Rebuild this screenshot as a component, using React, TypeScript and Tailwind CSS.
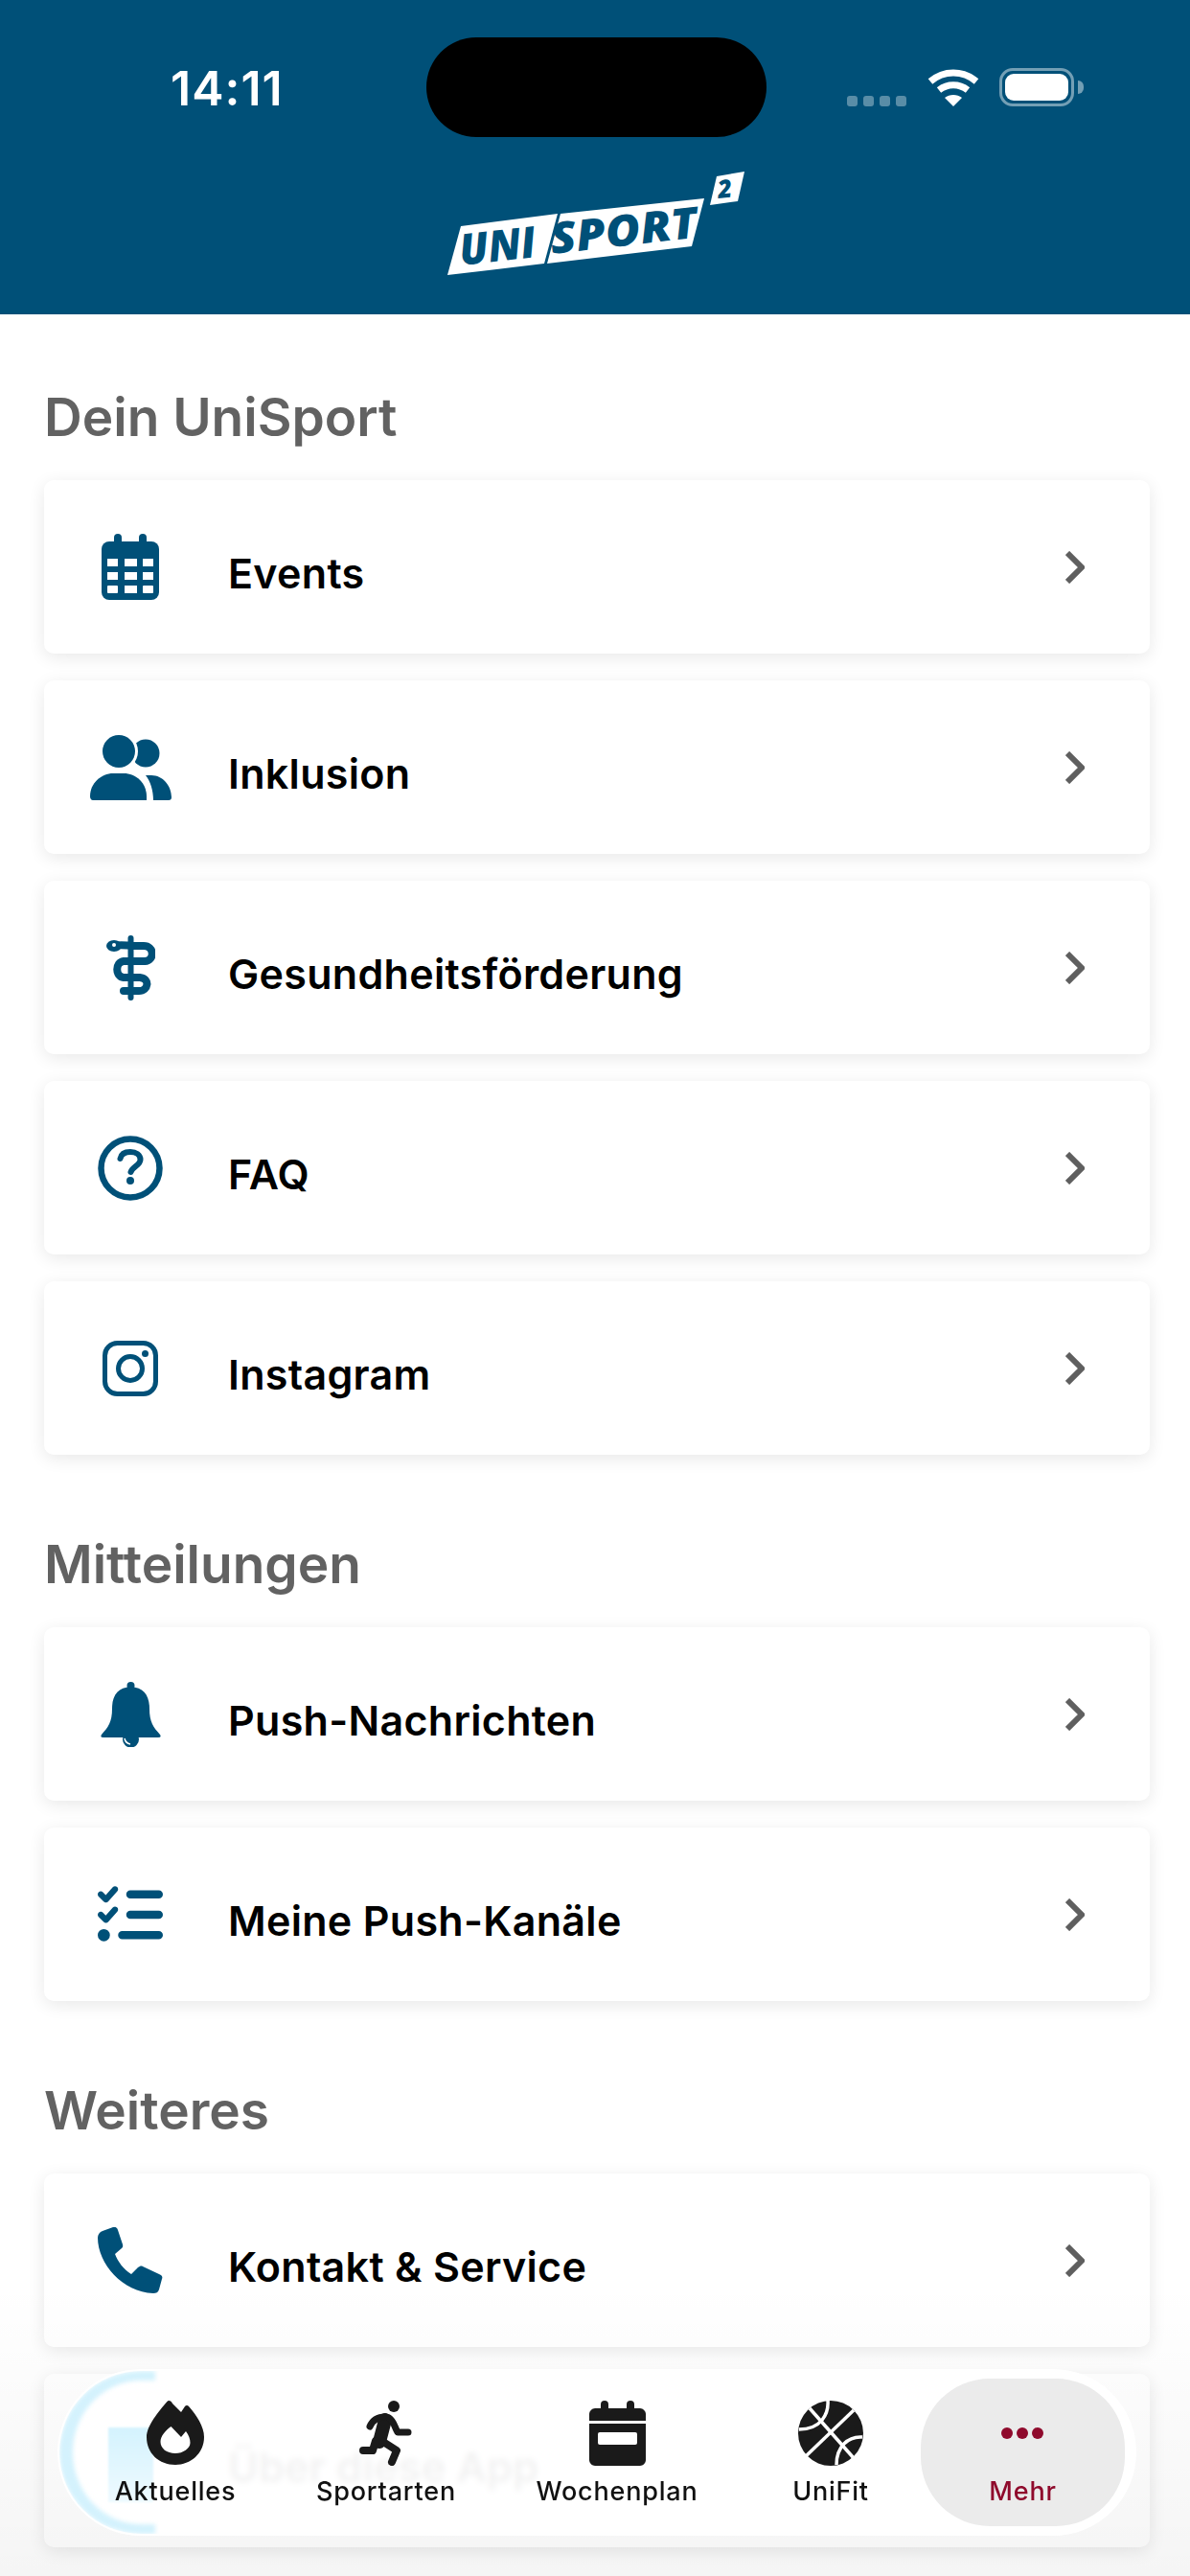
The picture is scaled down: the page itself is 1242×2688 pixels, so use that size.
import { FaListCheck } from "react-icons/fa6";
import type { ReactNode } from "react";

const BLUE = "#005078";

function CalendarIcon() {
  return (
    <svg width="60" height="69" viewBox="0 0 60 69" fill={BLUE}>
      <rect x="13" y="0" width="8" height="14" rx="4" />
      <rect x="39" y="0" width="8" height="14" rx="4" />
      <rect x="0" y="8" width="60" height="61" rx="8" />
      <g fill="#fff">
        <rect x="6" y="26" width="11" height="8" />
        <rect x="24" y="26" width="13" height="8" />
        <rect x="43" y="26" width="11" height="8" />
        <rect x="6" y="40" width="11" height="8" />
        <rect x="24" y="40" width="13" height="8" />
        <rect x="43" y="40" width="11" height="8" />
        <rect x="6" y="54" width="11" height="8" rx="1" />
        <rect x="24" y="54" width="13" height="8" />
        <rect x="43" y="54" width="11" height="8" rx="1" />
      </g>
    </svg>
  );
}

function UsersIcon() {
  return (
    <svg width="85" height="68" viewBox="0 0 85 68" fill={BLUE}>
      <circle cx="58" cy="19" r="14.500" />
      <path d="M58 42h6c12 0 21 11 21 23 0 2-1 3-3 3H66c0-10-3-20-8-26z" />
      <circle cx="30" cy="17" r="20" fill="#fff" />
      <circle cx="30" cy="17" r="17" />
      <path d="M0 64C0 50 12 40 24 40h11c13 0 24 10 24 24v4H3c-2 0-3-2-3-4z" />
      <path d="M52 41c6 7 9 16 10 27" fill="none" stroke="#fff" strokeWidth="3" />
    </svg>
  );
}

function StaffIcon() {
  return (
    <svg width="51" height="68" viewBox="0 0 51 68" fill="none" stroke={BLUE} strokeLinecap="round">
      <path d="M25.500 3v62" strokeWidth="6" />
      <path d="M8 11c8-2 14 0 20 0h11c11 0 12 15 1 16H18c-9 1-9 16 0 17h17c11 1 9 14-1 14H18" strokeWidth="8" />
      <ellipse cx="8" cy="11" rx="8" ry="6" fill={BLUE} stroke="none" />
      <circle cx="8" cy="10" r="2" fill="#fff" stroke="none" />
    </svg>
  );
}

function QuestionIcon() {
  return (
    <svg width="68" height="68" viewBox="0 0 68 68" fill="none" stroke={BLUE}>
      <circle cx="34" cy="34" r="30.500" strokeWidth="6.500" />
      <path d="M23.500 24c1-5 5-7 10.500-7 6 0 10.500 3 10.500 8 0 6-8 7-10 13" strokeWidth="6" strokeLinecap="round" />
      <circle cx="34" cy="47" r="4" fill={BLUE} stroke="none" />
    </svg>
  );
}

function InstagramIcon() {
  return (
    <svg width="58" height="58" viewBox="0 0 58 58" fill="none" stroke={BLUE}>
      <rect x="2.500" y="2.500" width="53" height="53" rx="13" strokeWidth="5" />
      <circle cx="29" cy="29" r="12.500" strokeWidth="5" />
      <circle cx="44.500" cy="13.500" r="3.500" fill={BLUE} stroke="none" />
    </svg>
  );
}

function BellIcon() {
  return (
    <svg width="63" height="68" viewBox="0 0 63 68" fill={BLUE}>
      <circle cx="31.500" cy="4" r="4" />
      <circle cx="31.500" cy="60" r="8.500" />
      <path d="M31.500 5C18 6 12 14 12 28 12 42 8 47 1 55q-2 3 2 3h57q4 0 2-3C55 47 51 42 51 28 51 14 45 6 31.500 5z" />
      <path d="M25 59q1 5 6 6" fill="none" stroke="#fff" strokeWidth="1.500" />
    </svg>
  );
}

function PhoneIcon() {
  return (
    <svg width="68" height="69" viewBox="0 0 68 69" fill={BLUE}>
      <path d="M5 4 16 0c2-.600 4 0 5 3l5 15c.500 2 0 3-1 4l-7 6c3 8 9 16 17 21l7-7c2-1 3-2 5-1l17 8c3 1 4 3 3 5l-3 11c-1 3-3 4-6 4C26 68 0 38 0 11c0-3 2-6 5-7z" />
    </svg>
  );
}

function FireIcon() {
  return (
    <svg width="60" height="67" viewBox="0 0 60 67" fill="#1a1a1a">
      <path
        fillRule="evenodd"
        d="M23 0c2 0 3 1 4 3l9 9 4-6c1-1.500 3-1.500 4 0 8 9 16 21 16 32 0 17-14 29-30 29C13 67 0 55 0 38 0 26 13 11 21 1.500 22 .5 22.500 0 23 0zM25.500 27 36 38l5-6c3 4 4.500 8 4.500 12 0 6-7.500 11-15.500 11-9 0-15.500-5-15.500-12 0-6 5.500-12 11-16z"
      />
    </svg>
  );
}

function RunnerIcon() {
  return (
    <svg width="56" height="68" viewBox="0 0 56 68" fill="none" stroke="#1a1a1a" strokeLinecap="round" strokeLinejoin="round">
      <circle cx="36" cy="6" r="6" fill="#1a1a1a" stroke="none" />
      <path d="M27 20 21 43" strokeWidth="14" />
      <path d="M27 17c-7 0-13 3-16 10" strokeWidth="7" />
      <path d="M31 18c5 3 6 10 9 15h11" strokeWidth="7" />
      <path d="M25 43l14 9-5 12" strokeWidth="8" />
      <path d="M17 42l-3 10H4" strokeWidth="8" />
    </svg>
  );
}

function WeekIcon() {
  return (
    <svg width="59" height="68" viewBox="0 0 59 68" fill="#1a1a1a">
      <rect x="12" y="0" width="8" height="14" rx="4" />
      <rect x="39" y="0" width="8" height="14" rx="4" />
      <path d="M6 8h47c3 0 6 3 6 6v7H0v-7c0-3 3-6 6-6z" />
      <path d="M0 24h59v38c0 3-3 6-6 6H6c-3 0-6-3-6-6z" />
      <rect x="9" y="33" width="41" height="13" rx="2" fill="#fff" />
    </svg>
  );
}

function BallIcon() {
  return (
    <svg width="68" height="68" viewBox="0 0 68 68" fill="none" stroke="#fff" strokeWidth="3.500">
      <circle cx="34" cy="34" r="34" fill="#1a1a1a" stroke="none" />
      <path d="M8 58 58 10" />
      <path d="M12 8 58 60" />
      <path d="M31 0c1 14-7 30-30 30" />
      <path d="M67 38c-15-1-27 10-27 29" />
    </svg>
  );
}

function Logo() {
  return (
    <svg width="320" height="115" viewBox="0 0 320 115" className="block overflow-visible">
      <polygon points="0,108 14,57 115,44 101,96" fill="#fff" />
      <polygon points="118,44 268,28 255,78 104,96" fill="#fff" />
      <polygon points="281,5 310,0 303,31 274,35" fill="#fff" />
      <g fill={BLUE} fontFamily="'Open Sans', sans-serif" fontWeight="800" fontStyle="italic">
        <text x="0" y="0" fontSize="45" textLength="80" lengthAdjust="spacingAndGlyphs" transform="translate(14,98) rotate(-6.500)">UNI</text>
        <text x="0" y="0" fontSize="45" textLength="154" lengthAdjust="spacingAndGlyphs" transform="translate(109,86) rotate(-6.500)">SPORT</text>
        <text x="0" y="0" fontSize="26" transform="translate(283,28) rotate(-6.500)">2</text>
      </g>
    </svg>
  );
}

function Row({ icon, label }: { icon: ReactNode; label: string }) {
  return (
    <div className="h-[181px] bg-white rounded-[10px] shadow-[0_4px_18px_rgba(0,0,0,0.09)] flex items-center">
      <div className="w-[180px] flex justify-center">{icon}</div>
      <div className="ml-[12px] mt-[13px] flex-1 text-[43px] tracking-[0.3px] font-semibold text-black font-['Inter',sans-serif]">{label}</div>
      <svg width="20" height="34" viewBox="0 0 20 34" className="mr-[68px]" fill="none" stroke="#5f5f5f" strokeWidth="6">
        <path d="M2 2l15 15L2 32" />
      </svg>
    </div>
  );
}

function Section({ title, children }: { title: string; children: ReactNode }) {
  return (
    <div>
      <h2 className="h-[56px] leading-[56px] text-[55px] font-semibold text-[#626262] font-['Inter',sans-serif] mb-[38px]">{title}</h2>
      <div className="flex flex-col gap-[28px]">{children}</div>
    </div>
  );
}

function Tab({ icon, label, active, className }: { icon: ReactNode; label: string; active?: boolean; className?: string }) {
  return (
    <div className={"pt-[3px] flex flex-col items-center " + (active ? "text-[#8f0a2c] " : "text-[#111] ") + (className ?? "")}>
      <div className="h-[68px] flex items-center justify-center">{icon}</div>
      <span className="mt-[10px] text-[27px] leading-[34px] tracking-[0.8px] font-medium font-['Inter',sans-serif]">{label}</span>
    </div>
  );
}

export default function App() {
  return (
    <div className="relative w-[1242px] h-[2688px] overflow-hidden bg-white">
      <header className="relative h-[328px] bg-[#005078]">
        <div className="absolute left-[445px] top-[39px] w-[355px] h-[104px] rounded-[52px] bg-black" />
        <div className="absolute left-[178px] top-[63px] text-[50px] leading-[58px] tracking-[1px] font-semibold text-white font-['Inter',sans-serif]">14:11</div>
        <div className="absolute left-[884px] top-[100px] flex gap-[6px]">
          <span className="w-[11px] h-[11px] rounded-[3px] bg-white/35" />
          <span className="w-[11px] h-[11px] rounded-[3px] bg-white/35" />
          <span className="w-[11px] h-[11px] rounded-[3px] bg-white/35" />
          <span className="w-[11px] h-[11px] rounded-[3px] bg-white/35" />
        </div>
        <svg className="absolute left-[968px] top-[72px]" width="54" height="39" viewBox="0 0 54 39" fill="none" stroke="#fff" strokeWidth="7">
          <path d="M3 13C17 1 37 1 51 13" />
          <path d="M12 22c9-7 21-7 30 0" />
          <path d="M27 39l-9-9c5-4 13-4 18 0z" fill="#fff" stroke="none" />
        </svg>
        <div className="absolute left-[1043px] top-[71px] w-[78px] h-[40px] rounded-[14px] border-[3px] border-white/45 p-[3px]">
          <div className="w-full h-full rounded-[9px] bg-white" />
        </div>
        <div className="absolute left-[1125px] top-[84px] w-[6px] h-[14px] rounded-r-full bg-white/45" />
        <div className="absolute left-[467px] top-[179px]">
          <Logo />
        </div>
      </header>

      <main className="pl-[46px] pr-[42px] pt-[79px] flex flex-col gap-[86px]">
        <Section title="Dein UniSport">
          <Row icon={<CalendarIcon />} label="Events" />
          <Row icon={<UsersIcon />} label="Inklusion" />
          <Row icon={<StaffIcon />} label="Gesundheitsförderung" />
          <Row icon={<QuestionIcon />} label="FAQ" />
          <Row icon={<InstagramIcon />} label="Instagram" />
        </Section>
        <Section title="Mitteilungen">
          <Row icon={<BellIcon />} label="Push-Nachrichten" />
          <Row icon={<FaListCheck size={68} color={BLUE} />} label="Meine Push-Kanäle" />
        </Section>
        <Section title="Weiteres">
          <Row icon={<PhoneIcon />} label="Kontakt & Service" />
          <Row icon={<div className="w-[48px] h-[70px]" />} label="Über diese App" />
        </Section>
      </main>

      {/* bottom fade behind the tab bar */}
      <div className="absolute left-0 right-0 top-[2380px] bottom-0 bg-gradient-to-b from-black/0 to-black/[0.04]" />

      <nav className="absolute left-[60px] top-[2472px] w-[1126px] h-[174px] rounded-[87px] bg-white/95 backdrop-blur-[3px] border-2 border-white overflow-hidden flex items-center pl-[26px]">
        <div className="absolute left-0 top-0 w-[100px] h-full rounded-l-[87px] border-l-[14px] border-y-[10px] border-[#d4f2fd] blur-[2px]" />
        <div className="absolute left-[51px] top-[59px] w-[47px] h-[78px] bg-gradient-to-b from-[#d4f3fe] to-[#eefaff] blur-[1px]" />
        <Tab className="relative w-[190px]" icon={<FireIcon />} label="Aktuelles" />
        <Tab className="w-[250px]" icon={<RunnerIcon />} label="Sportarten" />
        <Tab className="w-[232px]" icon={<WeekIcon />} label="Wochenplan" />
        <Tab className="ml-[13px] w-[188px]" icon={<BallIcon />} label="UniFit" />
        <div className="w-[213px] h-[154px] rounded-[72px] bg-[#ebebeb] flex items-center justify-center">
          <Tab
            icon={
              <div className="flex gap-[4px]">
                <span className="w-[12px] h-[12px] rounded-full bg-[#8f0a2c]" />
                <span className="w-[12px] h-[12px] rounded-full bg-[#8f0a2c]" />
                <span className="w-[12px] h-[12px] rounded-full bg-[#8f0a2c]" />
              </div>
            }
            label="Mehr"
            active
          />
        </div>
      </nav>
    </div>
  );
}
